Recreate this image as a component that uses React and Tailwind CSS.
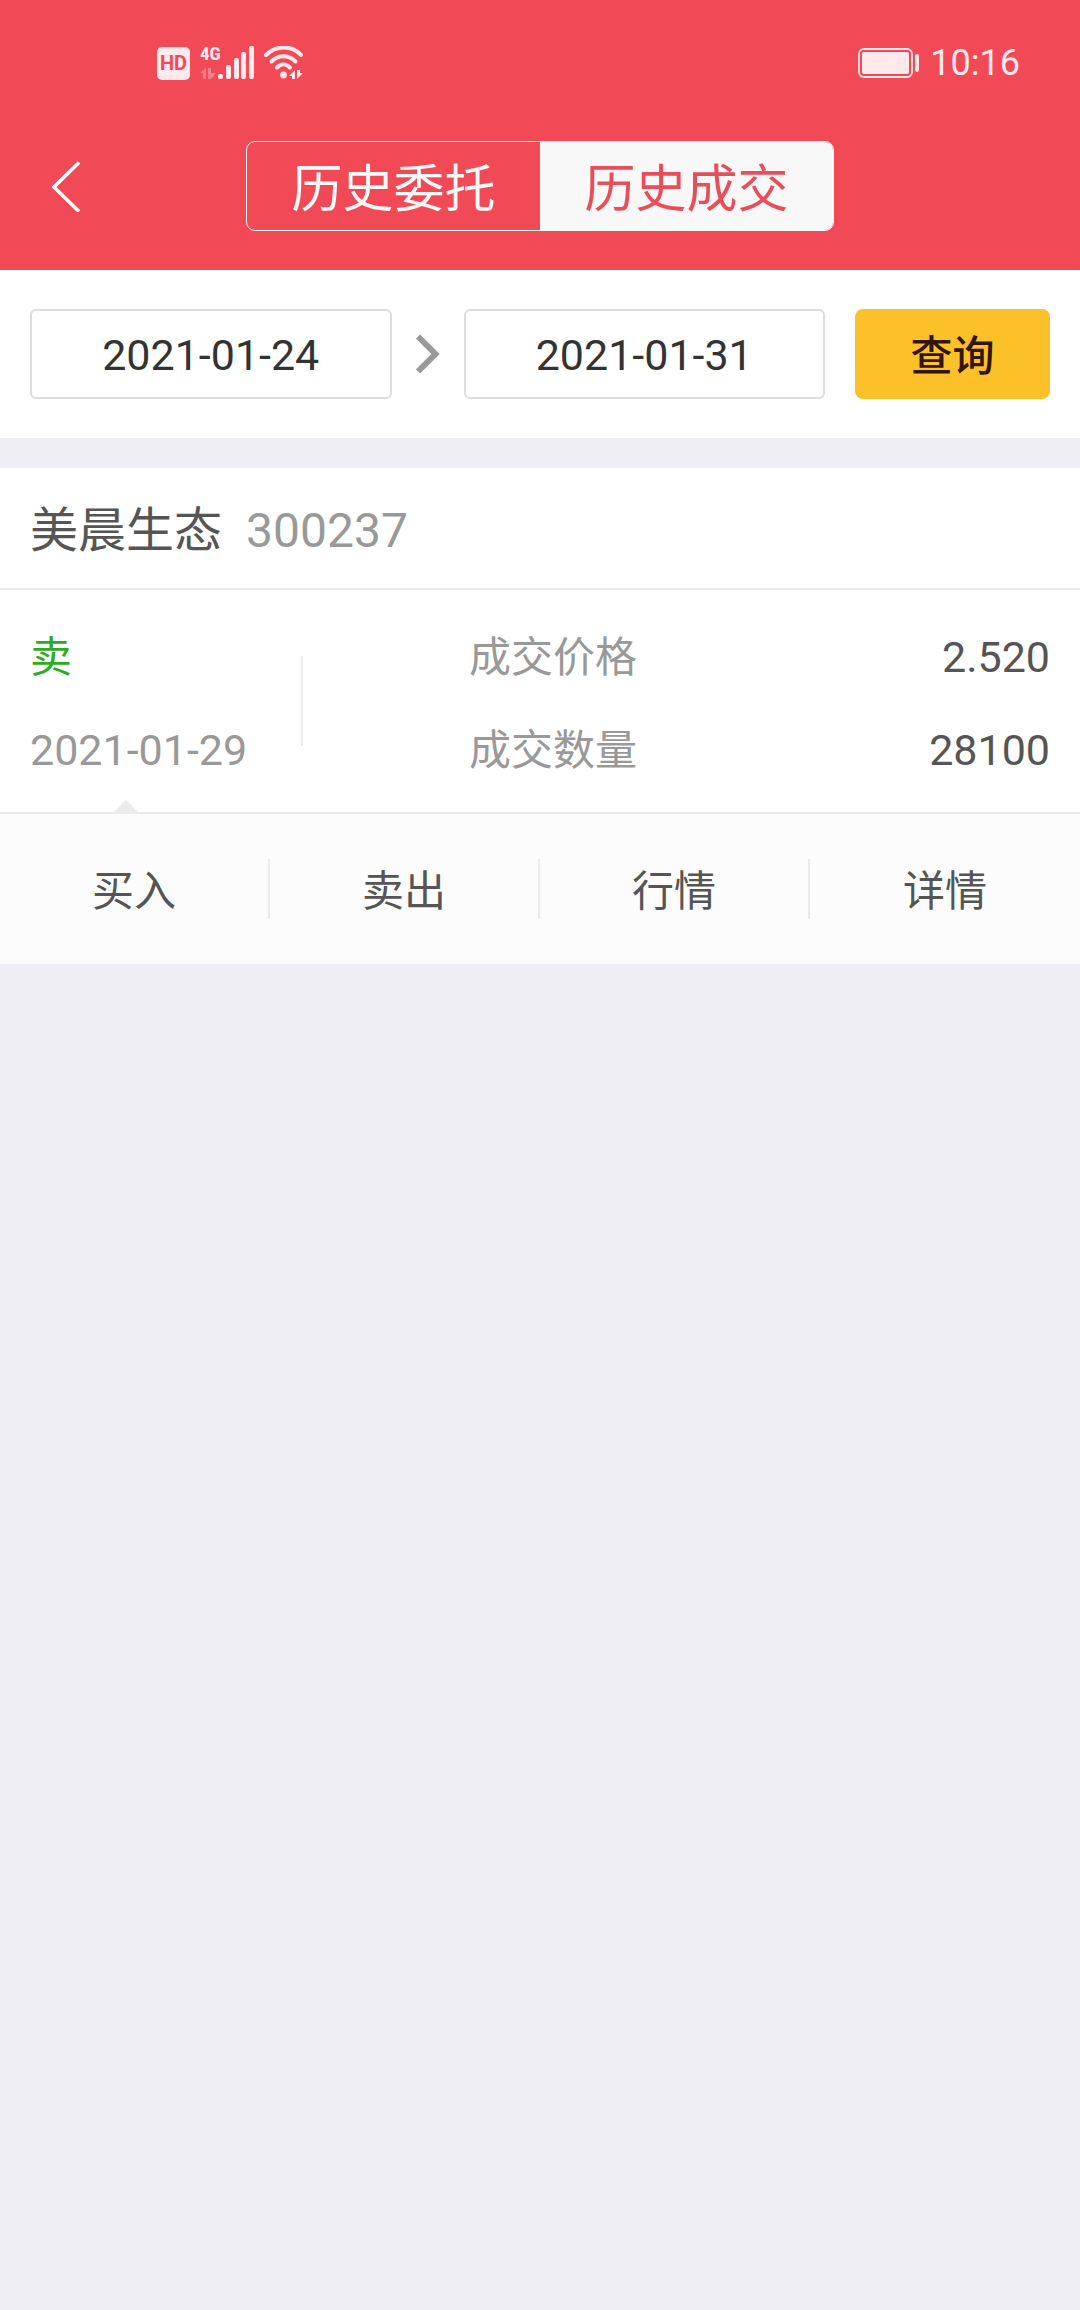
import { useState } from "react"

const TABS = ["历史委托", "历史成交"]
const ACTIONS = ["买入", "卖出", "行情", "详情"]

const trades = [
  {
    name: "美晨生态",
    code: "300237",
    side: "卖",
    date: "2021-01-29",
    price: "2.520",
    amount: "28100",
  },
]

function SignalIcons() {
  return (
    <div className="flex items-center gap-[10px]">
      <span className="flex size-[33px] items-center justify-center rounded-[5px] bg-[#ffe9eb] text-[20px] leading-8 font-bold text-[#f24957]">
        HD
      </span>
      <svg width="54" height="50" viewBox="0 -8 54 50" fill="#ffe9eb" aria-hidden="true">
        <text x="0" y="14" fontSize="19" fontWeight="700" fontFamily="'Roboto Condensed', Roboto, sans-serif">
          4G
        </text>
        <g opacity="0.35">
          <path d="M0 27l6-5v11H3v-6zM8 22h3v5h5l-5 6H8z" />
        </g>
        <rect x="18" y="28" width="5" height="5" rx="2" />
        <rect x="26" y="19" width="5" height="14" rx="2" />
        <rect x="34" y="12" width="5" height="21" rx="2" />
        <rect x="41" y="6" width="5" height="27" rx="2" />
        <rect x="49" y="0" width="5" height="33" rx="2" />
      </svg>
      <svg width="40" height="34" viewBox="0 0 40 34" fill="none" stroke="#ffe9eb" strokeWidth="4" strokeLinecap="round" aria-hidden="true">
        <path d="M2 9C12 -1 28 -1 37 9" />
        <path d="M7.500 15.500c7-7 17-7 24 0" />
        <path d="M13 21.500c4-4 9-4 13 0" />
        <circle cx="19.500" cy="29" r="3.400" fill="#ffe9eb" stroke="none" />
        <path d="M25 30l6-6v9h-3v-3zM33 24v9l6-6h-3v-3z" fill="#ffe9eb" stroke="none" />
      </svg>
    </div>
  )
}

function BatteryIcon() {
  return (
    <svg width="62" height="30" viewBox="0 0 62 30" aria-hidden="true">
      <rect x="1" y="1" width="53" height="28" rx="5" fill="none" stroke="#ffe9eb" strokeWidth="1.800" />
      <rect x="4" y="4" width="47" height="22" rx="2" fill="#ffe9eb" />
      <rect x="57" y="6" width="4" height="18" rx="2" fill="#ffe9eb" />
    </svg>
  )
}

function StatusBar() {
  return (
    <div className="flex h-[126px] items-center justify-between pr-[60px] pl-[157px]">
      <SignalIcons />
      <div className="flex items-center gap-[10px]">
        <BatteryIcon />
        <span className="text-[36px] leading-[42px] text-[#ffe9eb]">10:16</span>
      </div>
    </div>
  )
}

function NavBar({ active, onChange }) {
  return (
    <div className="grid h-[144px] grid-cols-[1fr_auto_1fr] items-center pb-[24px]">
      <button type="button" aria-label="返回" className="w-fit pl-[50px]">
        <svg width="30" height="52" viewBox="0 0 30 52" fill="none" stroke="#fff" strokeWidth="3.600" aria-hidden="true">
          <path d="M29 2.500L4 27l25 24.500" />
        </svg>
      </button>
      <div role="tablist" className="flex h-[90px] overflow-hidden rounded-[9px] border border-[#f8f8f8]">
        {TABS.map((tab, i) => (
          <button
            key={tab}
            type="button"
            role="tab"
            aria-selected={active === i}
            onClick={() => onChange(i)}
            className={
              active === i
                ? "w-[293px] bg-[#f8f8f8] pt-2 text-[51px] leading-[80px] text-[#e84e5a]"
                : "w-[293px] pt-2 text-[51px] leading-[80px] text-[#f8f8f8]"
            }
          >
            {tab}
          </button>
        ))}
      </div>
    </div>
  )
}

function DateInput({ label, value, onChange }) {
  return (
    <input
      type="text"
      aria-label={label}
      value={value}
      onChange={e => onChange(e.target.value)}
      className="h-[90px] w-0 flex-1 rounded-[6px] border-2 border-[#dddddd] bg-white pt-[2px] text-center text-[43px] text-[#333333] outline-none"
    />
  )
}

function TradeCard({ trade }) {
  return (
    <section className="bg-white text-[42px] leading-[63px]">
      <h2 className="flex h-[122px] items-center gap-6 border-b-2 border-[#ebebeb] px-[30px] pt-1 text-[48px] text-[#555555]">
        {trade.name}
        <span className="text-[#999999]">{trade.code}</span>
      </h2>

      <div className="relative flex items-center border-b-2 border-[#ebebeb] px-[30px]">
        <div className="flex w-[271px] flex-col gap-[30px] pt-9 pb-[30px]">
          <span className="text-[#2dab22]">{trade.side}</span>
          <span className="text-[43px] text-[#999999]">{trade.date}</span>
        </div>
        <div className="h-[90px] w-[2px] bg-[#ebebeb]" />
        <dl className="ml-[166px] flex flex-1 flex-col gap-[30px] pt-9 pb-[30px] text-[#555555]">
          <div className="flex justify-between">
            <dt className="text-[#999999]">成交价格</dt>
            <dd className="text-[43px]">{trade.price}</dd>
          </div>
          <div className="flex justify-between">
            <dt className="text-[#999999]">成交数量</dt>
            <dd className="text-[43px]">{trade.amount}</dd>
          </div>
        </dl>
        {/* pointer of the opened action row */}
        <svg className="absolute bottom-0 left-[114px]" width="24" height="12" viewBox="0 0 24 12" fill="#ebebeb" aria-hidden="true">
          <path d="M12 0l12 12H0z" />
        </svg>
      </div>

      <div className="grid h-[150px] grid-cols-4 items-center bg-[#fcfcfc] text-[#555555]">
        {ACTIONS.map(action => (
          <button
            key={action}
            type="button"
            className="h-[60px] border-r-2 border-[#ebebeb] pt-[6px] leading-[54px] last:border-r-0"
          >
            {action}
          </button>
        ))}
      </div>
    </section>
  )
}

export default function App() {
  const [tab, setTab] = useState(1)
  const [from, setFrom] = useState("2021-01-24")
  const [to, setTo] = useState("2021-01-31")

  return (
    <div className="min-h-screen bg-[#efeef4] font-[Roboto,'Noto_Sans_CJK_SC',sans-serif]">
      <header className="bg-[#f24957]">
        <StatusBar />
        <NavBar active={tab} onChange={setTab} />
      </header>

      {/* Date range */}
      <form className="flex h-[168px] items-center bg-white px-[30px]" onSubmit={e => e.preventDefault()}>
        <DateInput label="开始日期" value={from} onChange={setFrom} />
        <svg className="mx-6 shrink-0" width="24" height="40" viewBox="0 0 24 40" fill="none" stroke="#999" strokeWidth="6" aria-hidden="true">
          <path d="M2 2.500L19.500 20L2 37.500" />
        </svg>
        <DateInput label="结束日期" value={to} onChange={setTo} />
        <button type="submit" className="ml-[30px] h-[90px] w-[195px] rounded-[8px] bg-[#fcc129] pt-1 text-[42px] font-medium text-[#33150f]">
          查询
        </button>
      </form>

      <main className="pt-[30px]">
        {trades.map(trade => (
          <TradeCard key={trade.code + trade.date} trade={trade} />
        ))}
      </main>
    </div>
  )
}
